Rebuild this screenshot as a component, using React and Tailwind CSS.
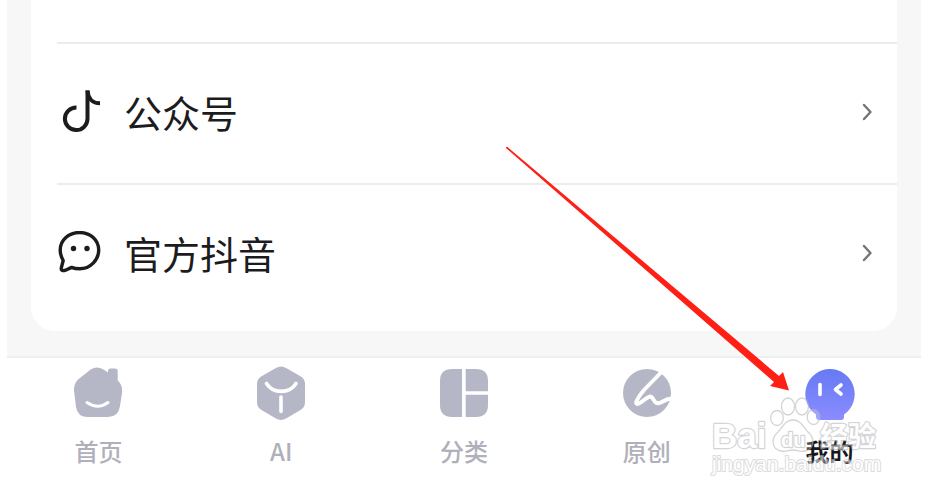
import React from "react";

function DouyinIcon() {
  return (
    <svg viewBox="0 0 44 44" className="size-11 shrink-0" fill="none" stroke="#1c1c1e" strokeWidth="4" aria-hidden="true">
      <path d="M19.500 17.500A11.300 11.300 0 1 0 30.500 28.800V.5" />
      <path d="M30.500 .5C31 8.500 35.500 13.300 43 13.300" />
    </svg>
  );
}

function ChatIcon() {
  return (
    <svg viewBox="0 0 44 44" className="size-11 shrink-0" fill="none" stroke="#1c1c1e" strokeWidth="3.400" strokeLinejoin="round" aria-hidden="true">
      <path d="M22.600 1.500C33.400 1.500 41.700 9.100 41.700 19S33.400 37.800 22.600 37.800C19.600 37.800 17 37.400 14.600 36.400L8.500 39.200C5.500 40.300 3.600 39.200 4.400 36.500L6.200 29.500C4.200 26 3.200 22.500 3.200 19C3.200 9.100 11.800 1.500 22.600 1.500Z" />
      <circle cx="16.500" cy="17.500" r="2.700" fill="#1c1c1e" stroke="none" />
      <circle cx="30" cy="17.500" r="2.700" fill="#1c1c1e" stroke="none" />
    </svg>
  );
}

function Chevron() {
  return (
    <svg viewBox="0 0 12 20" className="h-5 w-3" fill="none" stroke="#757575" strokeWidth="2.400" strokeLinecap="round" strokeLinejoin="round" aria-hidden="true">
      <path d="M3 3L9.500 10L3 17" />
    </svg>
  );
}

function HomeIcon() {
  return (
    <svg viewBox="0 0 54 56" className="h-14 w-[54px]" aria-hidden="true">
      <path fill="#b6b7c6" d="M20 4.200Q26 .6 32 4.200L37 7.400V6Q37 3.500 39.500 3.500H44Q46.700 3.500 46.700 6V15.500C50.500 19 51.700 23 51 28L49 41Q47.500 52 37 52H17Q6.500 52 5 42L3.200 27C2.600 21.500 4 17 8 13.800Z" />
      <path d="M16 37.500Q27 45 37 37.500" fill="none" stroke="#fff" strokeWidth="3" strokeLinecap="round" />
    </svg>
  );
}

function CubeIcon() {
  return (
    <svg viewBox="0 0 54 56" className="h-14 w-[54px]" aria-hidden="true">
      <path fill="#b6b7c6" d="M21.500 3.200Q27 0 32.500 3.200L46.500 11.300Q51 14 51 19V37Q51 42.500 46.500 45L32.500 53.300Q27 56.500 21.500 53.300L7.500 45Q3 42.500 3 37V19Q3 14 7.500 11.300Z" />
      <g fill="none" stroke="#fff" strokeWidth="3.600" strokeLinecap="round">
        <path d="M12.500 18.500C19 29 35.500 29 42 18.500" />
        <path d="M27 32V46.500" />
      </g>
    </svg>
  );
}

function GridIcon() {
  return (
    <svg viewBox="0 0 54 56" className="h-14 w-[54px]" fill="#b6b7c6" aria-hidden="true">
      <path d="M15 4H25V52H15Q3 52 3 40V16Q3 4 15 4Z" />
      <path d="M28.700 4H39Q51 4 51 16V26.200H28.700Z" />
      <path d="M28.700 29.800H51V40Q51 52 39 52H28.700Z" />
    </svg>
  );
}

function PenIcon() {
  return (
    <svg viewBox="0 0 54 56" className="h-14 w-[54px]" aria-hidden="true">
      <circle cx="27" cy="28" r="24" fill="#b6b7c6" />
      <path d="M42 6.500L24.500 24.500C21 28.500 18 32.500 16.200 37Q15.700 39.600 18.500 38.700C23 37 26 32.500 29.500 31.600C33.500 31 33 37 37 38.200C41.500 39.200 44 33.500 52 33.500" fill="none" stroke="#fff" strokeWidth="3.900" strokeLinecap="round" strokeLinejoin="round" />
    </svg>
  );
}

function ProfileIcon() {
  return (
    <svg viewBox="0 0 54 56" className="h-14 w-[54px]" aria-hidden="true">
      <defs>
        <linearGradient id="profileFill" x1="0" y1="0" x2="0" y2="1">
          <stop offset="0" stopColor="#667af4" />
          <stop offset="1" stopColor="#8b8cff" />
        </linearGradient>
      </defs>
      <path fill="url(#profileFill)" d="M27 4A25 25 0 0 1 41 49.500V52Q41 55 38 55H16Q13 55 13 52V49.500A25 25 0 0 1 27 4Z" />
      <g fill="none" stroke="#fff" strokeWidth="3.600" strokeLinecap="round" strokeLinejoin="round">
        <path d="M17 19.500V29.500" />
        <path d="M38 20L32.500 24.500L38 29" />
      </g>
    </svg>
  );
}

const links = [
  { label: "公众号", Icon: DouyinIcon },
  { label: "官方抖音", Icon: ChatIcon },
];

const tabs = [
  { label: "首页", Icon: HomeIcon },
  { label: "AI", Icon: CubeIcon },
  { label: "分类", Icon: GridIcon },
  { label: "原创", Icon: PenIcon },
  { label: "我的", Icon: ProfileIcon, active: true },
];

function PointerArrow() {
  return (
    <svg viewBox="0 0 284 244" className="pointer-events-none absolute right-[139px] top-[147px] h-[244px] w-[284px]" aria-hidden="true">
      <path fill="#ff2015" d="M0 0L1.500 0L273 229L277 225L283 243.500L264 239L268 235L0 1Z" />
    </svg>
  );
}

function Watermark() {
  return (
    <svg viewBox="0 0 172 84" className="pointer-events-none absolute right-[47px] top-[395px] h-[84px] w-[172px] opacity-60" aria-label="Baidu 经验">
      <g fill="#fff" fillOpacity="0.4" stroke="#b9b9bd" strokeWidth="1.300">
        <ellipse cx="67" cy="23" rx="6.300" ry="7.500" />
        <ellipse cx="78" cy="11.500" rx="6.500" ry="8.500" />
        <ellipse cx="92" cy="11.500" rx="6.500" ry="8.500" />
        <ellipse cx="103.500" cy="22" rx="6.300" ry="7.500" />
        <path d="M83 25C91 25 93 32 98 37C105 43 105 54 95 56C90 57 87 55 83 55S76 57 71 56C61 54 61 43 68 37C73 32 75 25 83 25Z" />
      </g>
      <g fill="#fff" stroke="#b9b9bd" strokeWidth="2.400" strokeLinejoin="round" fontWeight="700" className="[paint-order:stroke]">
        <text x="2" y="53" fontSize="35" className="font-['Liberation_Sans',sans-serif]">Bai</text>
        <text x="71" y="52" fontSize="20" className="font-['Liberation_Sans',sans-serif]">du</text>
        <text x="110" y="52" fontSize="28" className="font-['Noto_Sans_CJK_SC',sans-serif]">经验</text>
      </g>
      <text x="2" y="76" fontSize="21" fill="#fff" stroke="#c4c4c8" strokeWidth="2" strokeLinejoin="round" className="font-['Liberation_Sans',sans-serif] [paint-order:stroke]">jingyan.baidu.com</text>
    </svg>
  );
}

export default function App() {
  return (
    <div className="relative overflow-hidden bg-white pl-[7px] pr-2 font-['Noto_Sans_CJK_SC',sans-serif]">
      <main className="bg-[#f7f7f7] px-6 pb-[25px]">
        <ul className="rounded-b-3xl bg-white pb-[7px] pl-[26px] pt-[42px]">
          {links.map(({ label, Icon }) => (
            <li key={label} className="border-t-2 border-[#ececec]">
              <a href="#" className="flex h-[139px] items-center gap-[23px] pb-[3px] pr-6 text-[#1c1c1e]">
                <Icon />
                <span className="grow text-[38px] leading-[54px]">{label}</span>
                <Chevron />
              </a>
            </li>
          ))}
        </ul>
      </main>

      <nav className="flex border-t-2 border-[#efefef] pt-[7px]">
        {tabs.map(({ label, Icon, active }) => (
          <button
            key={label}
            type="button"
            aria-current={active ? "page" : undefined}
            className={`flex flex-1 flex-col items-center gap-3 pb-7 text-2xl ${active ? "font-bold text-[#17171a]" : "font-medium text-[#b0b0bb]"}`}
          >
            <Icon />
            <span className="leading-9">{label}</span>
          </button>
        ))}
      </nav>

      <PointerArrow />
      <Watermark />
    </div>
  );
}
